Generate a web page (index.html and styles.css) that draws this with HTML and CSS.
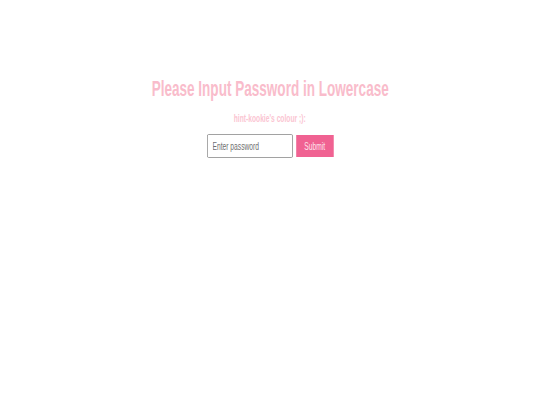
FILE: index.html
```html
<!DOCTYPE html>
<html>
<head>
<meta charset="utf-8">
<link rel="stylesheet" href="styles.css">
</head>
<body>
<main class="page">
  <h1 class="title">Please Input Password in Lowercase</h1>
  <p class="hint">hint-kookie's colour ;):</p>
  <form class="form">
    <input class="field" type="password" placeholder="Enter password">
    <button class="submit" type="button">Submit</button>
  </form>
</main>
</body>
</html>
```
FILE: styles.css
```css
html, body { margin: 0; padding: 0; background: #fff; }
body { font-family: "Liberation Sans", Arial, sans-serif; }
.page { display: flex; flex-direction: column; align-items: center; padding-top: 76px; }
.title { margin: 0; font-size: 21.5px; font-weight: bold; color: #f9bccb; line-height: 26px; white-space: nowrap; transform: scaleX(0.63); }
.hint { margin: 11px 0 0; font-size: 10px; font-weight: bold; color: #fbc5d2; line-height: 12px; white-space: nowrap; transform: scaleX(0.67); }
.form { display: flex; align-items: center; gap: 4.5px; margin-top: 9px; transform: scaleX(0.67); }
.field { box-sizing: border-box; width: 128px; height: 24px; border-style: solid; border-color: #8f8f8f; border-width: 1px 1.5px; border-radius: 2px; padding: 0 7px; font-family: inherit; font-size: 10px; color: #333; background: #fff; }
.field::placeholder { color: #6f6f6f; }
.submit { box-sizing: border-box; width: 56px; height: 22px; border: 0; background: #f06292; color: #fde4ec; font-family: inherit; font-size: 10px; padding: 0; }
```
